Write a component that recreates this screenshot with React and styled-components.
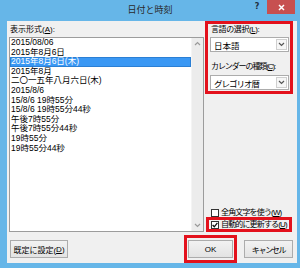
import React from 'react';
import styled, { createGlobalStyle } from 'styled-components';

const Global = createGlobalStyle`
  html, body { margin: 0; padding: 0; }
  body {
    width: 300px; height: 268px; overflow: hidden;
    font-family: "Liberation Sans", "Noto Sans CJK JP", sans-serif;
    color: #000;
  }
`;

const Window = styled.div`
  width: 300px; height: 268px;
  background: #66b6e8;
  display: flex; flex-direction: column;
`;

const TitleBar = styled.div`
  height: 21px; flex: none;
  display: grid; grid-template-columns: 1fr auto 1fr;
`;

const Title = styled.div`
  grid-column: 2;
  font-size: 9px; line-height: 21px; color: #2a2a2a;
`;

const TitleButtons = styled.div`
  display: flex; justify-content: flex-end; align-items: flex-start;
`;

const Help = styled.div`
  width: 10px; height: 14px; line-height: 14px;
  text-align: center; font-size: 8px; font-weight: bold; color: #1f2f3f;
  margin-right: 5px;
  font-family: "DejaVu Sans", sans-serif;
`;

const Close = styled.div`
  width: 28px; height: 14px; margin-right: 5px;
  background: #c75050;
  display: flex; align-items: center; justify-content: center;
`;

const Body = styled.div`
  flex: 1; min-height: 0;
  margin: 0 3px 5px 7px;
  background: #f0f0f0;
  display: flex; flex-direction: column;
`;

const Main = styled.div`
  flex: 1; min-height: 0;
  display: grid; grid-template-columns: 197px 1fr;
`;

const LeftCol = styled.div`
  display: flex; flex-direction: column; padding-left: 2px; min-height: 0;
`;

const Label = styled.div`
  font-size: 8px; line-height: 10px; height: 10px; white-space: nowrap;
  margin: ${p => p.$m || '0'};
  padding-left: ${p => p.$pl || '0'};
  letter-spacing: ${p => p.$ls || '0'};
`;

const U = styled.span`
  text-decoration: underline;
`;

const ListBox = styled.div`
  flex: 1; min-height: 0;
  border: 1px solid #9c9c9c;
  background: #fff;
  display: flex;
`;

const List = styled.div`
  flex: 1;
  display: flex; flex-direction: column;
`;

const Item = styled.div`
  height: 9.6px; line-height: 9.6px; font-size: 8.5px; white-space: nowrap;
  padding-left: 1px;
  box-sizing: border-box;
  background: ${p => p.$sel ? '#3a98f4' : 'transparent'};
  color: ${p => p.$sel ? '#fff' : '#000'};
  box-shadow: ${p => p.$sel ? 'inset 0 0 0 1px #2b7fd4' : 'none'};
`;

const ScrollBar = styled.div`
  width: 11px; flex: none;
  background: #ececec;
  border-left: 1px solid #f4f4f4;
  display: flex; flex-direction: column; justify-content: space-between;
`;

const Arrow = styled.div`
  height: 11px; display: flex; align-items: center; justify-content: center;
`;

const RightCol = styled.div`
  display: flex; flex-direction: column; min-height: 0;
`;

const RedFrame = styled.div`
  border: 3px solid #e3111c;
  box-sizing: border-box;
`;

const LangFrame = styled(RedFrame)`
  width: 88px; margin-left: 1px;
  padding: 1px 1px 1px 2px;
  display: flex; flex-direction: column;
`;

const Combo = styled.div`
  height: 15px; box-sizing: border-box;
  border: 1px solid #acacac; background: #fff;
  display: flex; align-items: center;
  margin-top: ${p => p.$mt || '0'};
`;

const ComboText = styled.div`
  flex: 1; font-size: 8.5px; padding-left: 3px; white-space: nowrap;
  letter-spacing: ${p => p.$ls || '0'};
`;

const ComboArrow = styled.div`
  width: 11px; height: 11px; box-sizing: border-box; margin-right: 1px;
  border: 1px solid #cfcfcf; background: #f6f6f6;
  display: flex; align-items: center; justify-content: center;
`;

const Spacer = styled.div`
  flex: 1;
`;

const CheckGroup = styled.div`
  width: 86px; margin-left: 2px;
  display: flex; flex-direction: column;
`;

const CheckRow = styled.div`
  display: flex; align-items: center; gap: 2px;
  border-style: solid;
  border-color: ${p => p.$hl ? '#e3111c' : 'transparent'};
  border-width: ${p => p.$hl ? '3px' : '0 3px'};
  padding-left: 2px;
  height: ${p => p.$hl ? '15px' : '9px'};
  box-sizing: border-box;
  overflow: hidden;
`;

const Box = styled.div`
  width: 8px; height: 8px; box-sizing: border-box; flex: none;
  border: 1px solid #333; background: #fff;
  display: flex; align-items: center; justify-content: center;
`;

const CheckText = styled.div`
  font-size: 8px; line-height: 9px; white-space: nowrap; letter-spacing: -0.85px;
`;

const Footer = styled.div`
  height: 31px; flex: none; box-sizing: border-box;
  display: flex; align-items: center;
  padding: 3px 4px 0 3px;
`;

const Button = styled.div`
  width: ${p => p.$w}px; height: 18px; box-sizing: border-box;
  border: 1px solid #acacac;
  background: linear-gradient(#f2f2f2, #e3e3e3);
  font-size: 8px; white-space: nowrap;
  display: flex; align-items: center; justify-content: center;
  letter-spacing: ${p => p.$ls || '0'};
`;

const OkFrame = styled(RedFrame)`
  padding: 2px 1px;
  margin-right: 7px;
`;

const Chevron = ({ up, color = '#9a9a9a' }) => (
  <svg width="7" height="5" viewBox="0 0 7 5">
    <polyline
      points={up ? '1,4 3.5,1.5 6,4' : '1,1 3.5,3.5 6,1'}
      fill="none" stroke={color} strokeWidth="1.2" />
  </svg>
);

const items = [
  '2015/08/06',
  '2015年8月6日',
  '2015年8月6日(木)',
  '2015年8月',
  '二〇一五年八月六日(木)',
  '2015/8/6',
  '15/8/6 19時55分',
  '15/8/6 19時55分44秒',
  '午後7時55分',
  '午後7時55分44秒',
  '19時55分',
  '19時55分44秒',
];

export default function App() {
  return (
    <>
      <Global />
      <Window>
        <TitleBar>
          <Title>日付と時刻</Title>
          <TitleButtons>
            <Help>?</Help>
            <Close>
              <svg width="7" height="7" viewBox="0 0 7 7">
                <path d="M1 1 L6 6 M6 1 L1 6" stroke="#fff" strokeWidth="1.5" />
              </svg>
            </Close>
          </TitleButtons>
        </TitleBar>
        <Body>
          <Main>
            <LeftCol>
              <Label $m="4px 0 2px 0" $pl="1px">表示形式(<U>A</U>):</Label>
              <ListBox>
                <List>
                  {items.map((t, i) => (
                    <Item key={i} $sel={i === 2}>{t}</Item>
                  ))}
                </List>
                <ScrollBar>
                  <Arrow><Chevron up /></Arrow>
                  <Arrow><Chevron /></Arrow>
                </ScrollBar>
              </ListBox>
            </LeftCol>
            <RightCol>
              <LangFrame>
                <Label $pl="1px" $ls="-0.4px">言語の選択(<U>L</U>):</Label>
                <Combo $mt="2px">
                  <ComboText>日本語</ComboText>
                  <ComboArrow><Chevron color="#555" /></ComboArrow>
                </Combo>
                <Label $m="10px 0 3px 0" $pl="1px" $ls="-1.1px">カレンダーの種類(<U>C</U>):</Label>
                <Combo>
                  <ComboText $ls="-1px">グレゴリオ暦</ComboText>
                  <ComboArrow><Chevron color="#555" /></ComboArrow>
                </Combo>
              </LangFrame>
              <Spacer />
              <CheckGroup>
                <CheckRow>
                  <Box />
                  <CheckText>全角文字を使う(<U>W</U>)</CheckText>
                </CheckRow>
                <CheckRow $hl>
                  <Box>
                    <svg width="6" height="6" viewBox="0 0 6 6">
                      <polyline points="0.6,3 2.3,4.8 5.4,0.8" fill="none" stroke="#111" strokeWidth="1.3" />
                    </svg>
                  </Box>
                  <CheckText>自動的に更新する(<U>U</U>)</CheckText>
                </CheckRow>
              </CheckGroup>
            </RightCol>
          </Main>
          <Footer>
            <Button $w={58}>既定に設定(<U>D</U>)</Button>
            <Spacer />
            <OkFrame>
              <Button $w={45}>OK</Button>
            </OkFrame>
            <Button $w={49} $ls="-1.3px">キャンセル</Button>
          </Footer>
        </Body>
      </Window>
    </>
  );
}
